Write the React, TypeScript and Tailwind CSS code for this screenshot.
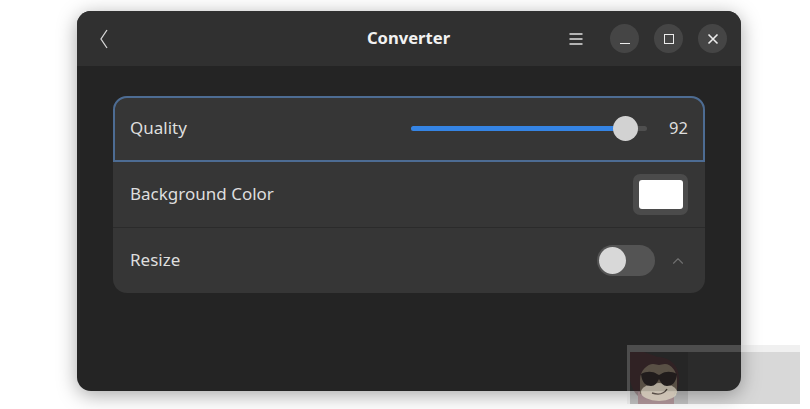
import { ChevronUp } from "lucide-react";

function WindowButton({ children }: { children: React.ReactNode }) {
  return (
    <button className="flex h-[29px] w-[29px] items-center justify-center rounded-full bg-[#454545] text-[#ececec]">
      {children}
    </button>
  );
}

// Faded badge that sits over the bottom right corner of the window
function Watermark() {
  return (
    <div className="absolute left-[627px] top-[345px] h-[64px] w-[183px]">
      <div className="absolute left-0 top-0 h-[7px] w-[173px] bg-[#c5c5c542]" />
      <div className="absolute left-0 top-[7px] h-[52px] w-[3px] bg-[#c5c5c542]" />
      <div className="absolute left-[3px] top-[7px] h-[52px] w-[170px] bg-[#45454536]" />
      <svg className="absolute left-[3px] top-[7px]" width="60" height="52" viewBox="0 0 60 52">
        <rect width="58" height="52" fill="#000" opacity="0.1" />
        <path d="M0 0h14l14 5c12 0 21 9 21 21 0 8-2 14-5 18v8H8v-8C2 38 0 30 0 26z" fill="#4a1c20" opacity="0.3" />
        <rect x="8" y="40" width="36" height="12" fill="#d9a4aa" opacity="0.25" />
        <g opacity="0.72">
          <path d="M10 28c0-10 8-16 13-16 3 0 4 1 6 1s3-1 6-1c6 0 12 7 12 16v14H10z" fill="#6a6252" />
          <ellipse cx="29" cy="40" rx="18" ry="9" fill="#e0dbc6" />
          <path d="M11 22c5-3 12-3 16 0l2 1 2-1c4-3 11-3 16 0-1 9-5 12-10 12-4 0-6-3-8-7-2 4-4 7-8 7-5 0-9-3-10-12z" fill="#1c1b1a" />
          <path d="M22 41c6 2 12 1 15-4" stroke="#3f3a2f" strokeWidth="1.4" fill="none" />
        </g>
      </svg>
    </div>
  );
}

export default function App() {
  return (
    <div
      className="relative h-[409px] w-[810px] overflow-hidden bg-white pl-[77px] pt-[11px]"
      style={{ fontFamily: '"Noto Sans", sans-serif' }}
    >
      <div className="flex h-[380px] w-[664px] flex-col overflow-hidden rounded-[14px] bg-[#242424] shadow-[0_4px_20px_rgba(0,0,0,0.35)]">
        {/* Header */}
        <div className="grid h-[55px] grid-cols-[1fr_auto_1fr] items-center bg-[#303030] pl-[18px] pr-[14px]">
          <svg width="18" height="22" viewBox="0 0 18 22" fill="none" className="text-[#d6d6d6]">
            <path d="M12 2 L6 11 L12 20" stroke="currentColor" strokeWidth="1.3" />
          </svg>
          <div className="mr-[5px] text-[16.6px] font-bold text-[#f2f2f2]">Converter</div>
          <div className="flex items-center justify-end">
            <svg width="14" height="12" viewBox="0 0 14 12" stroke="#dedede" strokeWidth="1.6" className="mr-[27px]">
              <path d="M0.5 1 H13.5 M0.5 6 H13.5 M0.5 11 H13.5" />
            </svg>
            <div className="flex gap-[15px]">
              <WindowButton>
                <span className="mt-[10px] h-[1px] w-[10px] bg-[#ececec]" />
              </WindowButton>
              <WindowButton>
                <span className="h-[10px] w-[10px] border-[1.5px] border-[#ececec]" />
              </WindowButton>
              <WindowButton>
                <svg width="12" height="12" viewBox="0 0 12 12" stroke="currentColor" strokeWidth="1.6">
                  <path d="M1.5 1.5 L10.5 10.5 M10.5 1.5 L1.5 10.5" />
                </svg>
              </WindowButton>
            </div>
          </div>
        </div>

        {/* Settings card */}
        <div className="ml-[36px] mt-[30px] flex h-[197px] w-[592px] flex-col rounded-[14px] bg-[#363636] text-[17px] text-[#dedede]">
          <div className="flex h-[66px] items-center rounded-t-[14px] border-2 border-[#4d6c93] pl-[15px] pr-[15px]">
            <span className="mb-[3px] flex-1">Quality</span>
            <div className="relative mb-[1px] mr-[21px] h-[5px] w-[236px] rounded-full bg-[#4f4f4f]">
              <div className="h-[5px] w-[205px] rounded-full bg-[#3584e4]" />
              <div className="absolute left-[202px] top-[-10px] h-[25px] w-[25px] rounded-full bg-[#d2d2d2]" />
            </div>
            <span className="mb-[1px] w-[20px] text-right text-[16.5px]">92</span>
          </div>
          <div className="flex h-[66px] items-center border-b border-[#2b2b2b] pl-[17px] pr-[17px]">
            <span className="mb-[1px] flex-1">Background Color</span>
            <div className="flex h-[41px] w-[55px] items-center justify-center rounded-[7px] bg-[#4b4b4b]">
              <div className="h-[29px] w-[44px] rounded-[3px] bg-white" />
            </div>
          </div>
          <div className="flex flex-1 items-center pl-[17px] pr-[18px]">
            <span className="mb-[2px] flex-1">Resize</span>
            <div className="relative mb-[1px] mr-[14px] h-[31px] w-[58px] rounded-full bg-[#545454]">
              <div className="absolute left-[2px] top-[2px] h-[27px] w-[27px] rounded-full bg-[#d8d8d8]" />
            </div>
            <ChevronUp size={18} strokeWidth={1.5} className="text-[#6f6f6f]" />
          </div>
        </div>
      </div>
      <Watermark />
    </div>
  );
}
